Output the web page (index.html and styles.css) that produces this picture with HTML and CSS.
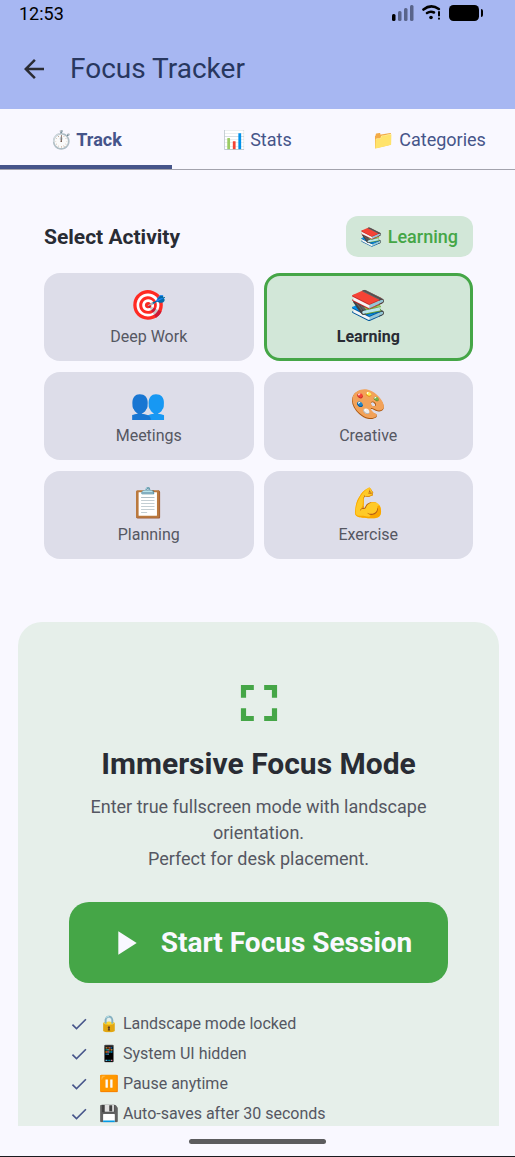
FILE: index.html
```html
<!DOCTYPE html>
<html lang="en">
<head>
<meta charset="utf-8">
<meta name="viewport" content="width=device-width, initial-scale=1">
<title>Focus Tracker</title>
<link rel="stylesheet" href="styles.css">
</head>
<body>
<div class="app">
  <header class="app-header">
    <div class="status-bar">
      <span>12:53</span>
      <div class="status-icons">
        <svg width="22" height="16" viewBox="0 0 22 16" aria-hidden="true">
          <rect x="0" y="9" width="3.500" height="7" rx="1.500" fill="#000"/>
          <g fill="#59648a"><rect x="6" y="6" width="3.500" height="10" rx="1.500"/><rect x="12" y="3" width="3.500" height="13" rx="1.500"/><rect x="18" y="0" width="3.500" height="16" rx="1.500"/></g>
        </svg>
        <svg width="19" height="16" viewBox="0 0 19 16" fill="none" stroke="#000" stroke-linecap="round" aria-hidden="true">
          <path d="M1.500 4.500Q9 -1.500 16.800 4" stroke-width="2.600"/>
          <path d="M5 8Q8.500 5.700 12 7.500" stroke-width="2.600"/>
          <circle cx="9" cy="12.500" r="1.800" fill="#000" stroke="none"/>
          <path d="M17 7v3.500M17 13.500v.2" stroke-width="2"/>
        </svg>
        <svg width="34" height="16" viewBox="0 0 34 16" aria-hidden="true"><rect width="30" height="16" rx="4.500"/><path d="M32 4q2 0 2 2v4q0 2-2 2z"/></svg>
      </div>
    </div>
    <div class="toolbar">
      <button class="back" aria-label="Back">
        <svg width="30" height="30" viewBox="0 0 24 24" aria-hidden="true"><path d="M20 11H7.830l5.590-5.590L12 4l-8 8 8 8 1.410-1.410L7.830 13H20z" fill="#2b2c33"/></svg>
      </button>
      <h1 class="page-title">Focus Tracker</h1>
    </div>
  </header>
  <nav class="tabs">
    <button class="tab tab-active">⏱️ Track</button>
    <button class="tab">📊 Stats</button>
    <button class="tab">📁 Categories</button>
  </nav>
  <main class="content">
    <section class="activities">
      <div class="section-head">
        <h2 class="section-title">Select Activity</h2>
        <span class="chip">📚 Learning</span>
      </div>
      <div class="activity-grid">
        <button class="activity"><span class="emoji">🎯</span>Deep Work</button>
        <button class="activity activity-selected"><span class="emoji">📚</span>Learning</button>
        <button class="activity"><span class="emoji">👥</span>Meetings</button>
        <button class="activity"><span class="emoji">🎨</span>Creative</button>
        <button class="activity"><span class="emoji">📋</span>Planning</button>
        <button class="activity"><span class="emoji">💪</span>Exercise</button>
      </div>
    </section>
    <section class="focus-card">
      <svg class="focus-icon" width="62" height="62" viewBox="0 0 24 24" aria-hidden="true"><path d="M5 5h5v2H7v3H5zM14 5h5v5h-2V7h-3zM5 14h2v3h3v2H5zM17 14h2v5h-5v-2h3z" fill="#45a647"/></svg>
      <h2 class="focus-title">Immersive Focus Mode</h2>
      <p class="focus-text">Enter true fullscreen mode with landscape orientation.<br>Perfect for desk placement.</p>
      <button class="start">
        <svg width="40" height="40" viewBox="0 0 24 24" aria-hidden="true"><path d="M8 5v14l11-7z" fill="#f9f8ff"/></svg>
        Start Focus Session
      </button>
      <ul class="features">
        <li><svg class="check" viewBox="0 0 24 24" aria-hidden="true"><path d="M9 16.170 4.830 12l-1.420 1.410L9 19 21 7l-1.410-1.410z"/></svg>🔒 Landscape mode locked</li>
        <li><svg class="check" viewBox="0 0 24 24" aria-hidden="true"><path d="M9 16.170 4.830 12l-1.420 1.410L9 19 21 7l-1.410-1.410z"/></svg>📱 System UI hidden</li>
        <li><svg class="check" viewBox="0 0 24 24" aria-hidden="true"><path d="M9 16.170 4.830 12l-1.420 1.410L9 19 21 7l-1.410-1.410z"/></svg>⏸️ Pause anytime</li>
        <li><svg class="check" viewBox="0 0 24 24" aria-hidden="true"><path d="M9 16.170 4.830 12l-1.420 1.410L9 19 21 7l-1.410-1.410z"/></svg>💾 Auto-saves after 30 seconds</li>
      </ul>
    </section>
  </main>
  <footer class="gesture-bar"><div class="handle"></div></footer>
</div>
</body>
</html>
```
FILE: styles.css
```css
* { box-sizing: border-box; }
body, h1, h2, p, ul { margin: 0; padding: 0; }
body {
  background: #f9f8ff;
  color: #292c34;
  font-family: Roboto, "Noto Color Emoji", sans-serif;
}
button { border: 0; background: none; padding: 0; font: inherit; color: inherit; }
svg { display: block; flex: none; }
.app { display: flex; flex-direction: column; height: 100vh; }

.app-header { background: #a7b7f2; flex: none; }
.status-bar {
  display: flex;
  justify-content: space-between;
  align-items: center;
  height: 26px;
  padding: 0 32px 0 19px;
  font-size: 18px;
  color: #000;
}
.status-icons { display: flex; gap: 8px; }
.toolbar { display: flex; align-items: center; gap: 21px; height: 83px; padding: 2px 19px 0; }
.page-title { font-size: 28px; font-weight: 400; line-height: 36px; color: #28375f; }

.tabs {
  display: grid;
  grid-template-columns: repeat(3, 1fr);
  flex: none;
  height: 61px;
  border-bottom: 1px solid #a3a3ad;
}
.tab { font-size: 18px; color: #46558a; border-bottom: 4px solid transparent; padding-top: 4px; white-space: nowrap; }
.tab-active { font-weight: 700; border-color: #46558a; }

.content { flex: 1; min-height: 0; overflow: hidden; padding: 46px 16px 0 18px; }
.activities { padding: 0 26px; }
.section-head { display: flex; align-items: center; justify-content: space-between; margin-bottom: 16px; }
.section-title { font-size: 21px; font-weight: 700; line-height: 24px; }
.chip {
  padding: 8px 15px;
  border-radius: 12px;
  background: #d2e7d8;
  color: #45a647;
  font-size: 18px;
  font-weight: 500;
  line-height: 25px;
}
.activity-grid { display: grid; grid-template-columns: 1fr 1fr; gap: 11px 10px; }
.activity {
  display: flex;
  flex-direction: column;
  align-items: center;
  justify-content: center;
  gap: 5px;
  height: 88px;
  border-radius: 16px;
  background: #dddde9;
  color: #555762;
  font-size: 16px;
  line-height: 20px;
}
.activity-selected { background: #d2e7d8; border: 3px solid #45a647; color: #292c34; font-weight: 700; }
.emoji { font-size: 29px; font-weight: 400; line-height: 34px; }

.focus-card {
  display: flex;
  flex-direction: column;
  align-items: center;
  margin-top: 63px;
  padding: 50px 51px;
  border-radius: 24px;
  background: #e6efea;
}
.focus-title { margin-top: 10px; font-size: 30px; font-weight: 700; line-height: 40px; }
.focus-text { margin-top: 10px; font-size: 18px; line-height: 26px; color: #555762; text-align: center; }
.start {
  display: flex;
  align-items: center;
  justify-content: center;
  gap: 16px;
  width: 100%;
  height: 81px;
  margin-top: 30px;
  border-radius: 20px;
  background: #45a647;
  color: #f9f8ff;
  font-size: 28px;
  font-weight: 700;
}
.features {
  display: flex;
  flex-direction: column;
  gap: 10px;
  align-self: stretch;
  margin-top: 31px;
  list-style: none;
  font-size: 16px;
  line-height: 20px;
  color: #555762;
}
.features li { display: flex; align-items: center; gap: 10px; }
.check { width: 20px; height: 20px; fill: #46558a; }

.gesture-bar {
  display: flex;
  align-items: center;
  justify-content: center;
  flex: none;
  height: 31px;
  border-bottom: 1px solid #1b1b1f;
}
.handle { width: 137px; height: 5px; border-radius: 3px; background: #5c5c5e; }
```
